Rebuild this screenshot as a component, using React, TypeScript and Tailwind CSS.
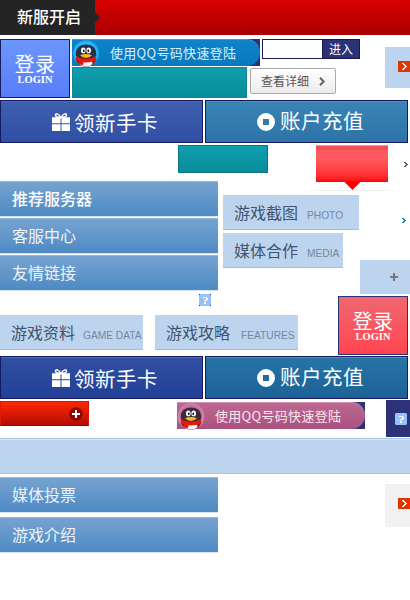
import React from "react";

const CJK = "font-['Noto_Sans_CJK_SC',sans-serif]";
const LATIN = "font-['Liberation_Sans',sans-serif]";
const SERIF = "font-['Liberation_Serif',serif]";

function Penguin({ pink = false }: { pink?: boolean }) {
  return (
    <svg width="28" height="27" viewBox="0 0 28 27" className="block shrink-0">
      <circle cx="14" cy="13.5" r="13.2" fill={pink ? "#d58bb0" : "#16a3e6"} />
      <circle cx="14" cy="13" r="11.8" fill={pink ? "#c9709c" : "#2db8f2"} />
      <path d="M5 16Q3 19 4.500 21.500Q8 26.500 14 26.500Q20.500 26.500 23.500 21.500Q25 19 23 16Z" fill="#8e1a1c" />
      <ellipse cx="14" cy="23" rx="6.500" ry="3.400" fill="#f4f4f4" />
      <path d="M3.800 15.500C3.300 8 7.500 4.500 14 4.500S24.700 8 24.200 15.500C21 19 7 19 3.800 15.500Z" fill={pink ? "#3a2b3b" : "#24334b"} />
      <ellipse cx="11.3" cy="10.4" rx="2.3" ry="2.9" fill="#fff" />
      <ellipse cx="16.7" cy="10.4" rx="2.3" ry="2.9" fill="#fff" />
      <ellipse cx="11.8" cy="10.8" rx="0.9" ry="1.4" fill="#111" />
      <ellipse cx="16.3" cy="10.8" rx="0.9" ry="1.4" fill="#111" />
      <path d="M8 15.2Q14 12.6 20 15.2Q17.5 18 14 18Q10.5 18 8 15.2Z" fill="#f5b722" />
      <path d="M4 16.6Q14 21.5 24 16.6L24.3 20.2Q18 22.8 11.6 22.3L10.8 25.5L6.800 23.800L7 21.4L3.8 20Z" fill="#e3180f" />
    </svg>
  );
}

function QQButton({ pink = false }: { pink?: boolean }) {
  return (
    <div className="h-[27px] w-[188px] shrink-0 bg-[#2c3178]">
      <div
        className={`flex h-[27px] items-center rounded-r-full rounded-l-[13px] border-t ${
          pink
            ? "border-[#d18fb4] bg-linear-to-b from-[#bd6893] to-[#a9527f]"
            : "border-[#3b9ad6] bg-linear-to-b from-[#0e83cb] to-[#0878bd]"
        }`}
      >
        <Penguin pink={pink} />
        <span className={`${CJK} ml-[10px] pb-px text-[13px] leading-[25px] tracking-[0.3px] whitespace-nowrap ${pink ? "text-[#f9e4ef]" : "text-[#d9effc]"}`}>
          使用QQ号码快速登陆
        </span>
      </div>
    </div>
  );
}

function Login({ red = false }: { red?: boolean }) {
  return (
    <div
      className={`flex h-[59px] w-[70px] shrink-0 flex-col items-center border text-white ${
        red
          ? "border-[#2c3178] bg-linear-to-b from-[#f0666f] to-[#ff4450]"
          : "border-[#171c5e] bg-linear-to-b from-[#6c97fc] to-[#597cf8]"
      }`}
    >
      <span className={`${CJK} mt-[14px] text-[20px] leading-[20px] tracking-[0.5px]`}>登录</span>
      <span className={`${SERIF} text-[10.5px] leading-[11px] font-bold`}>LOGIN</span>
    </div>
  );
}

function Gift() {
  return (
    <svg width="18" height="18" viewBox="0 0 18 18" className="block">
      <path d="M9 4.5C6.5-.2 3.2.2 3.5 2.4 3.7 4 6.5 4.4 9 4.5 11.5 4.4 14.3 4 14.5 2.4 14.8.2 11.5-.2 9 4.5Z" fill="none" stroke="#fff" strokeWidth="1.4" />
      <path d="M0 4.300h8.5v5.9H0zM9.5 4.300H18v5.9H9.500zM0 11.200h8.500V18H0zM9.500 11.200H18V18H9.500z" fill="#fff" />
    </svg>
  );
}

function Coin() {
  return (
    <svg width="18" height="18" viewBox="0 0 18 18" className="block">
      <path fillRule="evenodd" d="M9 0a9 9 0 1 0 0 18A9 9 0 0 0 9 0ZM6 6h6v6H6Z" fill="#fff" />
    </svg>
  );
}

function ActionRow({ dark = false }: { dark?: boolean }) {
  return (
    <div className={`${CJK} flex h-[43px] shrink-0 gap-[2px] text-[20.5px] text-white`}>
      <div
        className={`flex w-[203px] border border-[#161b60] pl-[51px] shadow-[inset_0_1px_#4b69bb] ${
          dark ? "bg-linear-to-b from-[#3150a3] to-[#224096]" : "bg-linear-to-b from-[#3f5fae] to-[#304fa5]"
        }`}
      >
        <div className="pt-[12px]"><Gift /></div>
        <span className="ml-[4px] pt-[2px] leading-[38px] tracking-[0.5px] whitespace-nowrap">领新手卡</span>
      </div>
      <div
        className={`flex w-[203px] border border-[#161b60] pl-[51px] shadow-[inset_0_1px_#4f91be] ${
          dark ? "bg-linear-to-b from-[#2874a7] to-[#1c6297]" : "bg-linear-to-b from-[#3a85b5] to-[#2d73a8]"
        }`}
      >
        <div className="pt-[12px]"><Coin /></div>
        <span className="ml-[5px] leading-[38px] tracking-[0.5px] whitespace-nowrap">账户充值</span>
      </div>
    </div>
  );
}

function MenuItem({ label, bright = false }: { label: string; bright?: boolean }) {
  return (
    <div className={`${CJK} h-[35px] w-[218px] shrink-0 border-t border-[#92b9d9] bg-linear-to-b from-[#75a3d1] to-[#4e8ac4] pl-[12px] text-[16px] leading-[32px] shadow-[0_1px_#d5e3f2] ${bright ? "font-medium text-white" : "text-[#f0f3f6]"}`}>
      {label}
    </div>
  );
}

function Heading({ label, en, width, pad, gap }: { label: string; en: string; width: string; pad: string; gap: string }) {
  return (
    <div className={`flex h-[35px] shrink-0 items-start border-b border-[#a5bed7] bg-[#bdd4ee] ${width} ${pad}`}>
      <span className={`${CJK} text-[16px] leading-[35px] whitespace-nowrap text-[#405470]`}>{label}</span>
      <span className={`${LATIN} pt-[15px] text-[10.2px] leading-[12px] whitespace-nowrap text-[#7587a1] ${gap}`}>{en}</span>
    </div>
  );
}

function Arrow() {
  return (
    <svg width="12" height="11" viewBox="0 0 12 11" className="block" shapeRendering="crispEdges">
      <path d="M0 0h12v11H0z" fill="#df3500" />
      <path d="M4 2h2v1h1v1h1v1h1v1H8v1H7v1H6v1H4V8h1V7h1V6h1V5H6V4H5V3H4z" fill="#fff" />
    </svg>
  );
}

function Chevron({ color }: { color: string }) {
  return (
    <svg width="4" height="5" viewBox="0 0 4 5" className="block" shapeRendering="crispEdges">
      <path d="M0 0h2v1h1v1h1v1H3v1H2v1H0V4h1V3h1V2H1V1H0z" fill={color} />
    </svg>
  );
}

function Help({ rounded = false }: { rounded?: boolean }) {
  return (
    <svg width="12" height="12" viewBox="0 0 12 12" className="block">
      {!rounded && <path d="M0 0h12v12H0z" fill="#2c3a86" />}
      <path d={rounded ? "M1 0h10l1 1v10l-1 1H1l-1-1V1z" : "M1 0h10v1h1v10h-1v1H1v-1H0V1h1z"} fill="#98c1fb" />
      <path d="M4 3h4v1h1v2H8v1H5V6h2V4H4zM5 8h2v2H5z" fill="#fff" shapeRendering="crispEdges" />
    </svg>
  );
}

export default function App() {
  return (
    <div className="flex h-[600px] w-[410px] flex-col overflow-hidden bg-white">
      <header className="flex h-[35px] shrink-0 bg-linear-to-b from-[#d90000] to-[#a90000]">
        <div className={`${CJK} w-[95px] bg-[#242424] pl-[17px] text-[16px] leading-[32px] font-medium text-white`}>新服开启</div>
        <svg width="5" height="35" viewBox="0 0 5 35" className="block"><path d="M0 12.5L5 17.5 0 22.5Z" fill="#242424" /></svg>
      </header>

      <section className="flex h-[65px] shrink-0 pt-[4px]">
        <Login />
        <div className="ml-[2px] w-[288px]">
          <div className="flex gap-[2px]">
            <QQButton />
            <div className="flex h-[20px] w-[98px] border border-[#161b50] bg-white">
              <div className={`${CJK} ml-[59px] w-[37px] border-l border-[#161b50] bg-[#2c3178] pl-[6px] text-[12px] leading-[18px] whitespace-nowrap text-white`}>进入</div>
            </div>
          </div>
          <div className="mt-px flex gap-[3px]">
            <div className="h-[31px] w-[175px] border border-[#16878f] bg-linear-to-b from-[#109fae] to-[#088c9a]" />
            <div className={`${CJK} mt-[1px] flex h-[26px] w-[86px] items-center rounded-[2px] border border-[#a9a9a9] bg-linear-to-b from-white to-[#ececec] pl-[10px] text-[12px] whitespace-nowrap text-[#555]`}>
              <span className="pb-px leading-[20px]">查看详细</span>
              <svg width="6" height="9" viewBox="0 0 6 9" className="ml-[10px] block"><path d="M1 .8L4.6 4.5 1 8.2" fill="none" stroke="#666" strokeWidth="2" /></svg>
            </div>
          </div>
        </div>
        <div className="mt-[8px] ml-[25px] h-[41px] w-[25px] bg-[#bdd4ee] pt-[14px] pl-[13px]"><Arrow /></div>
      </section>

      <ActionRow />

      <section className="flex h-[38px] shrink-0 pt-[2px]">
        <div className="ml-[178px] h-[28px] w-[90px] border border-[#0c7680] bg-linear-to-b from-[#109fae] to-[#088c9a]" />
        <div className="ml-[48px] w-[72px]">
          <div className="h-[37px] border-t border-[#f79aa0] bg-linear-to-b from-[#ff5a61] from-35% to-[#fe000b] shadow-[inset_0_4px_#f0505a]" />
          <svg width="72" height="9" viewBox="0 0 72 9" className="block">
            <path d="M28.5 0h16L36.5 8z" fill="#fe0000" />
            <path d="M0 8h72v1H0z" fill="#efefef" />
          </svg>
        </div>
        <div className="mt-[17px] ml-[16px]"><Chevron color="#555" /></div>
      </section>

      <section className="flex h-[113px] shrink-0">
        <nav className="flex w-[218px] flex-col gap-[2px]">
          <MenuItem label="推荐服务器" bright />
          <MenuItem label="客服中心" />
          <MenuItem label="友情链接" />
        </nav>
        <div className="ml-[5px] flex w-[137px] flex-col gap-[3px] pt-[14px]">
          <Heading label="游戏截图" en="PHOTO" width="w-[136px]" pad="pl-[11px]" gap="ml-[9px]" />
          <Heading label="媒体合作" en="MEDIA" width="w-[120px]" pad="pl-[11px]" gap="ml-[9px]" />
        </div>
        <div className="w-[50px] pt-[37px]">
          <div className="ml-[42px]"><Chevron color="#0b8080" /></div>
          <div className="mt-[37px] h-[34px] bg-[#bdd4ee] pt-[13px] pl-[30px]">
            <svg width="8" height="8" viewBox="0 0 8 8" className="block" shapeRendering="crispEdges"><path d="M3 0h2v3h3v2H5v3H3V5H0V3h3z" fill="#77777b" /></svg>
          </div>
        </div>
      </section>

      <section className="flex h-[62px] shrink-0">
        <div className="w-[338px]">
          <div className="ml-[199px]"><Help /></div>
          <div className="mt-[9px] flex gap-[12px]">
            <Heading label="游戏资料" en="GAME DATA" width="w-[143px]" pad="pl-[11px]" gap="ml-[8px]" />
            <Heading label="游戏攻略" en="FEATURES" width="w-[143px]" pad="pl-[11px]" gap="ml-[11px]" />
          </div>
        </div>
        <div className="pt-[2px]"><Login red /></div>
      </section>

      <ActionRow dark />

      <section className="flex h-[39px] shrink-0 pt-px">
        <div className="mt-px flex h-[25px] w-[89px] justify-end border border-b-[#850d05] border-[#dc1800] bg-linear-to-b from-[#ff2600] to-[#b30d05] pt-[5px] pr-[5px]">
          <svg width="14" height="14" viewBox="0 0 14 14" className="block"><circle cx="7" cy="7" r="6.700" fill="#8f0505" /><path d="M6 3h2v3h3v2H8v3H6V8H3V6h3z" fill="#fff" /></svg>
        </div>
        <div className="mt-[2px] ml-[88px]"><QQButton pink /></div>
        <div className="ml-[21px] h-[37px] w-[24px] bg-[#2c3178] pt-[13px] pl-[9px]"><Help rounded /></div>
      </section>

      <div className="h-[36px] shrink-0 border-y border-[#a6c6dc] bg-[#bdd4ee] shadow-[inset_0_1px_#d7e6f4]" />

      <section className="flex h-[126px] shrink-0 pt-[3px]">
        <nav className="flex w-[218px] flex-col gap-[5px]">
          <MenuItem label="媒体投票" />
          <MenuItem label="游戏介绍" />
        </nav>
        <div className="mt-[7px] ml-[167px] h-[43px] w-[25px] bg-[#f2f1f2] pt-[14px] pl-[13px]"><Arrow /></div>
      </section>
    </div>
  );
}
